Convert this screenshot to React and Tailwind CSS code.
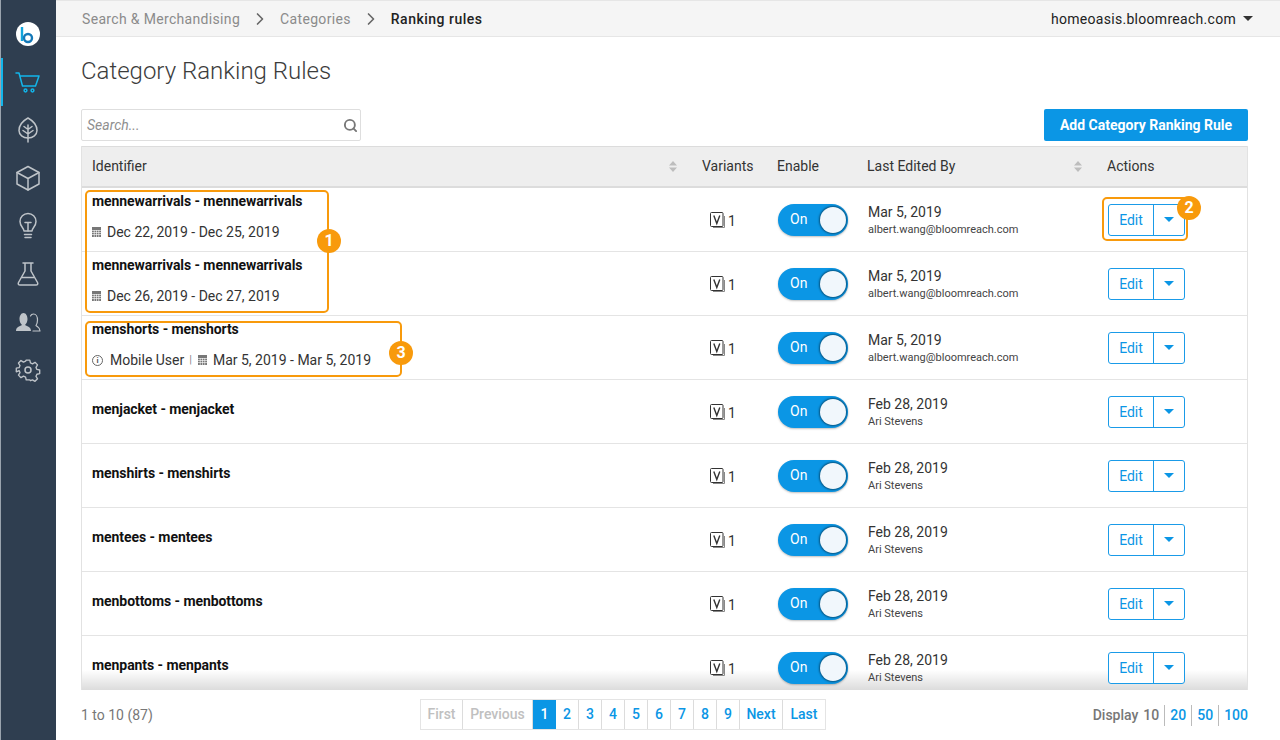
import { ChevronRight, Search } from 'lucide-react';

const rows = [
  { name: 'mennewarrivals - mennewarrivals', date: 'Dec 22, 2019 - Dec 25, 2019', edited: 'Mar 5, 2019', by: 'albert.wang@bloomreach.com' },
  { name: 'mennewarrivals - mennewarrivals', date: 'Dec 26, 2019 - Dec 27, 2019', edited: 'Mar 5, 2019', by: 'albert.wang@bloomreach.com' },
  { name: 'menshorts - menshorts', user: 'Mobile User', date: 'Mar 5, 2019 - Mar 5, 2019', edited: 'Mar 5, 2019', by: 'albert.wang@bloomreach.com' },
  { name: 'menjacket - menjacket', edited: 'Feb 28, 2019', by: 'Ari Stevens' },
  { name: 'menshirts - menshirts', edited: 'Feb 28, 2019', by: 'Ari Stevens' },
  { name: 'mentees - mentees', edited: 'Feb 28, 2019', by: 'Ari Stevens' },
  { name: 'menbottoms - menbottoms', edited: 'Feb 28, 2019', by: 'Ari Stevens' },
  { name: 'menpants - menpants', edited: 'Feb 28, 2019', by: 'Ari Stevens' },
];

const cols = 'grid grid-cols-[610px_75px_90px_240px_150px]';

function NavIcon({ children, className = 'text-[#bfc4c9]' }) {
  return (
    <svg width="28" height="28" viewBox="0 0 28 28" fill="none" stroke="currentColor" strokeWidth="1.5" strokeLinecap="round" strokeLinejoin="round" className={className}>
      {children}
    </svg>
  );
}

function Sidebar() {
  return (
    <aside className="w-[56px] shrink-0 bg-[#2f3e50] border-l border-[#9aa3ad] flex flex-col items-center relative pr-[1px]">
      <div className="mt-[22px] w-6 h-6 rounded-full bg-white overflow-hidden">
        <svg width="24" height="24" viewBox="0 0 24 24" fill="none">
          <path d="M6 5v14" stroke="#12a5dc" strokeWidth="2.4" />
          <circle cx="12" cy="16" r="4" stroke="#1579b8" strokeWidth="2.4" />
        </svg>
      </div>
      <div className="absolute left-0 top-[58px] w-[2px] h-[48px] bg-[#12b5ea]" />
      <div className="flex flex-col items-center gap-[20px] mt-[22px]">
        <NavIcon className="text-[#12b5ea]">
          <path d="M2 5h3l3.500 13h13L25 8H6" />
          <circle cx="11.500" cy="22.500" r="1.400" />
          <circle cx="18.500" cy="22.500" r="1.400" />
        </NavIcon>
        <NavIcon>
          <path d="M14 2c4.500 2.500 9 7 9 12.500 0 4.200-4 7.500-9 7.500s-9-3.300-9-7.500C5 9 9.500 4.500 14 2z" />
          <path d="M14 9v17M14 13.500l4-3M14 13.500l-4-3M14 18l5-3.500M14 18l-5-3.500" />
        </NavIcon>
        <NavIcon>
          <path d="M14 2.500l11 6v11.500l-11 6-11-6V8.500z" />
          <path d="M3 8.500l11 6 11-6M14 14.500v11.500" />
        </NavIcon>
        <NavIcon>
          <path d="M10 19c0-3-4-4.500-4-9.500a8 8 0 0 1 16 0c0 5-4 6.500-4 9.500z" />
          <path d="M10.500 22.500h7M11 25.500h6M11 10.500h6M14 10.500V19" />
        </NavIcon>
        <NavIcon>
          <path d="M9 3h10M11 3v8L4.500 22.500c-.7 1.500 0 2.500 1.500 2.500h16c1.500 0 2.200-1 1.500-2.500L17 11V3" />
          <path d="M8 17.500h12" />
        </NavIcon>
        <NavIcon>
          <path d="M2 23c0-4 3.500-4.500 6-6-1.500-1.500-2.500-3.500-2.500-6C5.500 8 7 5 9.500 5s4 3 4 6c0 2.500-1 4.500-2.500 6 2.500 1.500 6 2 6 6z" fill="currentColor" stroke="none" />
          <path d="M19 23h7c0-3.500-2.500-4-4-5.500 1-1.500 1.500-3 1.500-5.500 0-3-1.500-6-4-6-1.500 0-2.500.8-3 2" strokeWidth="1.200" />
        </NavIcon>
        <NavIcon>
          <circle cx="14" cy="14" r="3" />
          <path d="M12 3h4l.7 3.200 2.300 1 2.800-1.700 2.800 2.800-1.700 2.800 1 2.300 3.100.6v4l-3.100.7-1 2.300 1.700 2.800-2.800 2.800-2.800-1.700-2.300 1L16 25h-4l-.7-3.200-2.300-1-2.800 1.700-2.800-2.800 1.700-2.800-1-2.300L1 16v-4l3.100-.6 1-2.300-1.700-2.800 2.800-2.800L9 5.200l2.300-1z" transform="translate(1.400 1.400) scale(.9)" />
        </NavIcon>
      </div>
    </aside>
  );
}

function Toggle() {
  return (
    <div className="w-[70px] h-8 rounded-full bg-[#0b96e5] flex items-center justify-between pl-[12px] pr-[2px] shadow-[0_1px_2px_rgba(0,0,0,0.25)]">
      <span className="text-white text-[14px]">On</span>
      <span className="w-[26px] h-[26px] rounded-full bg-[#f1f7fc] shadow-[0_0_2px_1px_rgba(0,0,0,0.45)]" />
    </div>
  );
}

function VariantIcon() {
  return (
    <svg width="16" height="17" viewBox="0 0 16 17" fill="none" className="text-[#333]">
      <path d="M3 15.500h11.500V4" stroke="#888" strokeWidth="1" />
      <rect x=".5" y=".5" width="12.500" height="14" rx="1" stroke="currentColor" strokeWidth="1" fill="white" />
      <path d="M3.800 3.500l3 8 3-8" stroke="currentColor" strokeWidth="1.400" />
    </svg>
  );
}

function CalendarIcon() {
  return (
    <svg width="9" height="10" viewBox="0 0 9 10" className="shrink-0">
      <rect width="9" height="10" fill="#777" />
      <path d="M0 3.500h9M0 5.500h9M0 7.500h9M2.250 3v7M4.500 3v7M6.750 3v7" stroke="#fff" strokeWidth=".6" />
    </svg>
  );
}

function SortIcon() {
  return (
    <svg width="8" height="11" viewBox="0 0 8 11" fill="#bdbdbd" className="shrink-0">
      <path d="M4 0l4 4.500H0zM4 11L0 6.500h8z" />
    </svg>
  );
}

function Badge({ n, className }) {
  return (
    <span className={`absolute w-[24px] h-[24px] rounded-full bg-[#f89a0c] text-white text-[16px] font-bold flex items-center justify-center ${className}`}>
      {n}
    </span>
  );
}

function Row({ r, i }) {
  return (
    <div className={`${cols} h-[64px] border-b border-[#e4e4e4] items-center relative`}>
      <div className="pl-[10px] self-start">
        <div className={`text-[14px] font-bold text-[#111] leading-[18px] tracking-[-0.07px] ${r.date ? 'mt-[4px]' : 'mt-[20px]'}`}>{r.name}</div>
        {r.date && (
          <div className="flex items-center text-[14px] text-[#333] leading-[18px] mt-[13px]">
            {r.user && (
              <>
                <span className="w-[11px] h-[11px] rounded-full border border-[#666] text-[8px] font-bold text-[#555] leading-[9px] text-center shrink-0">i</span>
                <span className="ml-[7px]">{r.user}</span>
                <span className="ml-[5px] mr-[6px] text-[#888] text-[11px]">|</span>
              </>
            )}
            <CalendarIcon />
            <span className="ml-[6px]">{r.date}</span>
          </div>
        )}
      </div>
      <div className="pl-[18px] pt-[1px] flex items-center gap-[2px] text-[14px] text-[#333]">
        <VariantIcon />
        <span className="pt-[2px]">1</span>
      </div>
      <div className="pl-[11px]"><Toggle /></div>
      <div className="pl-[11px] pt-[2px]">
        <div className="text-[14px] text-[#333] leading-[17px]">{r.edited}</div>
        <div className="text-[11px] text-[#444] leading-[17px]">{r.by}</div>
      </div>
      <div className="pl-[11px]">
        <div className="flex w-[77px] h-8 rounded-[3px] border border-[#1a9be8] bg-white text-[#0b96e5] text-[14px]">
          <span className="w-[45px] flex items-center justify-center border-r border-[#1a9be8] pt-[2px]">Edit</span>
          <span className="flex-1 flex items-center justify-center">
            <span className="border-x-[5px] border-x-transparent border-t-[5px] border-t-[#0b96e5]" />
          </span>
        </div>
      </div>
      {i === 0 && (
        <>
          <div className="absolute left-[3px] top-[2px] w-[244px] h-[123px] rounded-[5px] border-2 border-[#f89a0c] z-10" />
          <Badge n="1" className="left-[235px] top-[41px] z-20" />
          <div className="absolute left-[1020px] top-[9px] w-[86px] h-[44px] rounded-[5px] border-2 border-[#f89a0c] z-10" />
          <Badge n="2" className="left-[1095px] top-[8px] z-20" />
        </>
      )}
      {i === 2 && (
        <>
          <div className="absolute left-[3px] top-[5px] w-[317px] h-[56px] rounded-[5px] border-2 border-[#f89a0c] z-10" />
          <Badge n="3" className="left-[307px] top-[25px] z-20" />
        </>
      )}
    </div>
  );
}

function PageLink({ children, className = 'text-[#0b96e5]' }) {
  return <span className={`h-full flex items-center justify-center border-r border-[#dcdcdc] last:border-r-0 ${className}`}>{children}</span>;
}

export default function App() {
  return (
    <div className="w-[1280px] h-[740px] overflow-hidden flex bg-white font-['Roboto',sans-serif]">
      <Sidebar />
      <main className="flex-1 flex flex-col min-w-0">
        <header className="h-[37px] shrink-0 bg-[#f5f5f5] border-y border-[#e6e6e6] flex items-center pl-[26px] pr-[27px] text-[14px] tracking-[0.33px]">
          <span className="text-[#8b8b8b] pt-[1px]">Search & Merchandising</span>
          <ChevronRight size={20} strokeWidth={2} className="text-[#666] mx-[10px]" />
          <span className="text-[#8b8b8b] pt-[1px]">Categories</span>
          <ChevronRight size={20} strokeWidth={2} className="text-[#666] mx-[10px]" />
          <span className="text-[#222] font-medium pt-[1px] tracking-[0.5px]">Ranking rules</span>
          <span className="ml-auto text-[#222] pt-[1px] tracking-[0.29px]">homeoasis.bloomreach.com</span>
          <span className="ml-[7px] border-x-[5px] border-x-transparent border-t-[5px] border-t-[#333]" />
        </header>

        <div className="flex-1 flex flex-col pl-[25px] pr-[32px] min-h-0">
          <h1 className="text-[24px] font-light text-[#3c3c3c] leading-[30px] mt-[19px]">Category Ranking Rules</h1>

          <div className="flex justify-between items-center mt-[23px] mb-[5px]">
            <div className="w-[280px] h-[32px] border border-[#dedede] rounded-[2px] flex items-center justify-between pl-[5px] pr-[2px]">
              <span className="text-[14px] italic text-[#8f8f8f]">Search...</span>
              <Search size={15} strokeWidth={3} className="text-[#777]" />
            </div>
            <button className="w-[204px] h-[32px] rounded-[2px] bg-[#0b96e5] text-white text-[14px] font-bold">Add Category Ranking Rule</button>
          </div>

          <div className="h-[544px] w-[1167px] border-x border-[#e2e2e2] overflow-hidden relative">
            <div className="absolute left-0 right-0 bottom-0 h-[20px] bg-gradient-to-b from-white to-[#dcdcdc]" />
            <div className={`${cols} h-[42px] bg-[#eeeeee] border-t border-[#dcdcdc] border-b-2 pb-[1px] items-center text-[14px] text-[#333] relative`}>
              <div className="pl-[10px] pr-[15px] flex items-center justify-between">Identifier<SortIcon /></div>
              <div className="pl-[10px]">Variants</div>
              <div className="pl-[10px]">Enable</div>
              <div className="pl-[10px] pr-[15px] flex items-center justify-between">Last Edited By<SortIcon /></div>
              <div className="pl-[10px]">Actions</div>
            </div>
            {rows.map((r, i) => <Row key={i} r={r} i={i} />)}
          </div>

          <footer className="h-[50px] flex items-center relative text-[14px]">
            <span className="text-[#777]">1 to 10 (87)</span>
            <div className="absolute left-[339px] top-[9px] h-[31px] flex border border-[#e4e4e4] font-medium">
              <PageLink className="text-[#c0c0c0] w-[42px]">First</PageLink>
              <PageLink className="text-[#c0c0c0] w-[70px]">Previous</PageLink>
              <span className="w-[23px] flex items-center justify-center bg-[#0b96e5] text-white">1</span>
              {[2, 3, 4, 5, 6, 7, 8, 9].map(n => <PageLink key={n} className="text-[#0b96e5] w-[23px]">{n}</PageLink>)}
              <PageLink className="text-[#0b96e5] w-[43px]">Next</PageLink>
              <PageLink className="text-[#0b96e5] w-[42px]">Last</PageLink>
            </div>
            <div className="ml-auto flex items-center font-medium text-[#777]">
              <span>Display</span>
              <span className="ml-[5px] pr-[5px] border-r border-[#bbb]">10</span>
              <span className="px-[5px] text-[#0b96e5] border-r border-[#bbb]">20</span>
              <span className="px-[5px] text-[#0b96e5] border-r border-[#bbb]">50</span>
              <span className="pl-[5px] text-[#0b96e5]">100</span>
            </div>
          </footer>
        </div>
      </main>
    </div>
  );
}
